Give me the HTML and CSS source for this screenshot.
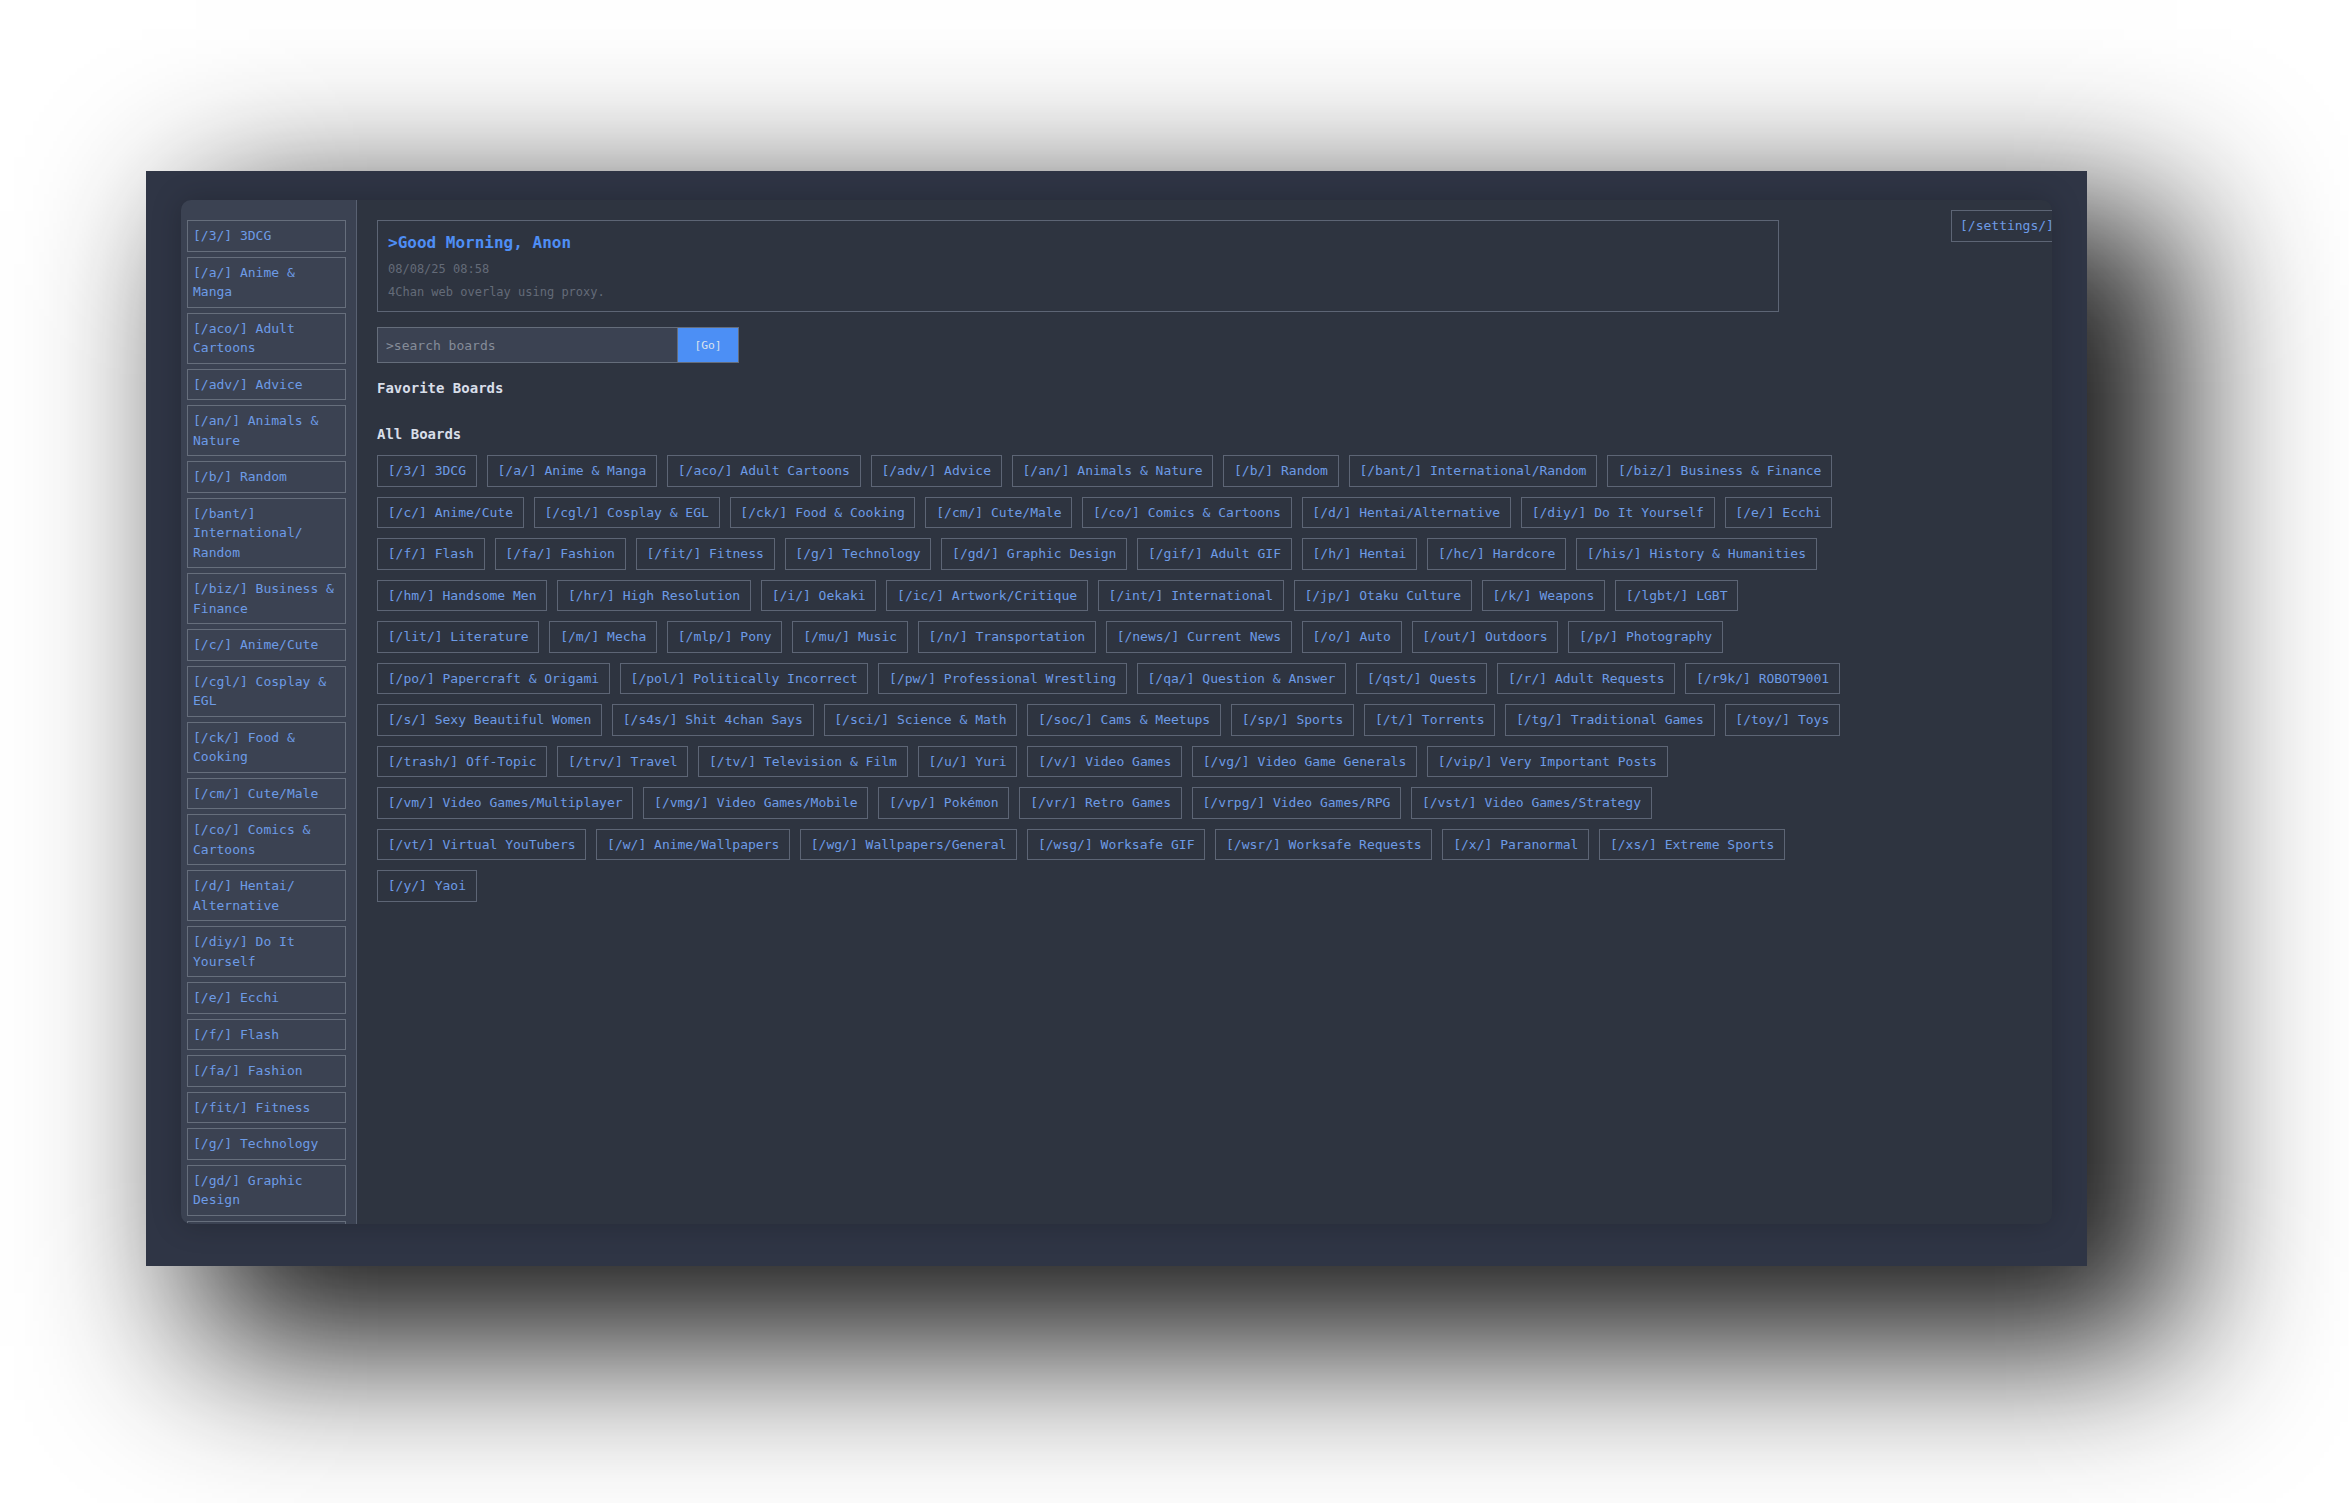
FILE: index.html
```html
<!DOCTYPE html>
<html lang="en">
<head>
<meta charset="utf-8">
<title>4Chan overlay</title>
<link rel="stylesheet" href="styles.css">
</head>
<body>
<div class="stage">
  <div class="window">
    <div class="panel">
      <nav class="sidebar">
        <a class="side-item">[/3/] 3DCG</a>
        <a class="side-item">[/a/] Anime &amp; Manga</a>
        <a class="side-item">[/aco/] Adult Cartoons</a>
        <a class="side-item">[/adv/] Advice</a>
        <a class="side-item">[/an/] Animals &amp; Nature</a>
        <a class="side-item">[/b/] Random</a>
        <a class="side-item">[/bant/] International/<wbr>Random</a>
        <a class="side-item">[/biz/] Business &amp; Finance</a>
        <a class="side-item">[/c/] Anime/Cute</a>
        <a class="side-item">[/cgl/] Cosplay &amp; EGL</a>
        <a class="side-item">[/ck/] Food &amp; Cooking</a>
        <a class="side-item">[/cm/] Cute/Male</a>
        <a class="side-item">[/co/] Comics &amp; Cartoons</a>
        <a class="side-item">[/d/] Hentai/<wbr>Alternative</a>
        <a class="side-item">[/diy/] Do It Yourself</a>
        <a class="side-item">[/e/] Ecchi</a>
        <a class="side-item">[/f/] Flash</a>
        <a class="side-item">[/fa/] Fashion</a>
        <a class="side-item">[/fit/] Fitness</a>
        <a class="side-item">[/g/] Technology</a>
        <a class="side-item">[/gd/] Graphic Design</a>
        <a class="side-item">[/gif/] Adult GIF</a>
        <a class="side-item">[/h/] Hentai</a>
        <a class="side-item">[/hc/] Hardcore</a>
      </nav>
      <main class="main">
        <section class="header">
          <h1 class="title">&gt;Good Morning, Anon</h1>
          <p class="meta">08/08/25 08:58</p>
          <p class="meta">4Chan web overlay using proxy.</p>
        </section>
        <form class="search">
          <input class="search-input" type="text" placeholder="&gt;search boards">
          <button class="go" type="button">[Go]</button>
        </form>
        <h3 class="section-title">Favorite Boards</h3>
        <div class="grid"></div>
        <h3 class="section-title">All Boards</h3>
        <div class="grid">
          <a class="board">[/3/] 3DCG</a>
          <a class="board">[/a/] Anime &amp; Manga</a>
          <a class="board">[/aco/] Adult Cartoons</a>
          <a class="board">[/adv/] Advice</a>
          <a class="board">[/an/] Animals &amp; Nature</a>
          <a class="board">[/b/] Random</a>
          <a class="board">[/bant/] International/Random</a>
          <a class="board">[/biz/] Business &amp; Finance</a>
          <a class="board">[/c/] Anime/Cute</a>
          <a class="board">[/cgl/] Cosplay &amp; EGL</a>
          <a class="board">[/ck/] Food &amp; Cooking</a>
          <a class="board">[/cm/] Cute/Male</a>
          <a class="board">[/co/] Comics &amp; Cartoons</a>
          <a class="board">[/d/] Hentai/Alternative</a>
          <a class="board">[/diy/] Do It Yourself</a>
          <a class="board">[/e/] Ecchi</a>
          <a class="board">[/f/] Flash</a>
          <a class="board">[/fa/] Fashion</a>
          <a class="board">[/fit/] Fitness</a>
          <a class="board">[/g/] Technology</a>
          <a class="board">[/gd/] Graphic Design</a>
          <a class="board">[/gif/] Adult GIF</a>
          <a class="board">[/h/] Hentai</a>
          <a class="board">[/hc/] Hardcore</a>
          <a class="board">[/his/] History &amp; Humanities</a>
          <a class="board">[/hm/] Handsome Men</a>
          <a class="board">[/hr/] High Resolution</a>
          <a class="board">[/i/] Oekaki</a>
          <a class="board">[/ic/] Artwork/Critique</a>
          <a class="board">[/int/] International</a>
          <a class="board">[/jp/] Otaku Culture</a>
          <a class="board">[/k/] Weapons</a>
          <a class="board">[/lgbt/] LGBT</a>
          <a class="board">[/lit/] Literature</a>
          <a class="board">[/m/] Mecha</a>
          <a class="board">[/mlp/] Pony</a>
          <a class="board">[/mu/] Music</a>
          <a class="board">[/n/] Transportation</a>
          <a class="board">[/news/] Current News</a>
          <a class="board">[/o/] Auto</a>
          <a class="board">[/out/] Outdoors</a>
          <a class="board">[/p/] Photography</a>
          <a class="board">[/po/] Papercraft &amp; Origami</a>
          <a class="board">[/pol/] Politically Incorrect</a>
          <a class="board">[/pw/] Professional Wrestling</a>
          <a class="board">[/qa/] Question &amp; Answer</a>
          <a class="board">[/qst/] Quests</a>
          <a class="board">[/r/] Adult Requests</a>
          <a class="board">[/r9k/] ROBOT9001</a>
          <a class="board">[/s/] Sexy Beautiful Women</a>
          <a class="board">[/s4s/] Shit 4chan Says</a>
          <a class="board">[/sci/] Science &amp; Math</a>
          <a class="board">[/soc/] Cams &amp; Meetups</a>
          <a class="board">[/sp/] Sports</a>
          <a class="board">[/t/] Torrents</a>
          <a class="board">[/tg/] Traditional Games</a>
          <a class="board">[/toy/] Toys</a>
          <a class="board">[/trash/] Off-Topic</a>
          <a class="board">[/trv/] Travel</a>
          <a class="board">[/tv/] Television &amp; Film</a>
          <a class="board">[/u/] Yuri</a>
          <a class="board">[/v/] Video Games</a>
          <a class="board">[/vg/] Video Game Generals</a>
          <a class="board">[/vip/] Very Important Posts</a>
          <a class="board">[/vm/] Video Games/Multiplayer</a>
          <a class="board">[/vmg/] Video Games/Mobile</a>
          <a class="board">[/vp/] Pokémon</a>
          <a class="board">[/vr/] Retro Games</a>
          <a class="board">[/vrpg/] Video Games/RPG</a>
          <a class="board">[/vst/] Video Games/Strategy</a>
          <a class="board">[/vt/] Virtual YouTubers</a>
          <a class="board">[/w/] Anime/Wallpapers</a>
          <a class="board">[/wg/] Wallpapers/General</a>
          <a class="board">[/wsg/] Worksafe GIF</a>
          <a class="board">[/wsr/] Worksafe Requests</a>
          <a class="board">[/x/] Paranormal</a>
          <a class="board">[/xs/] Extreme Sports</a>
          <a class="board">[/y/] Yaoi</a>
        </div>
      </main>
      <a class="settings">[/settings/]</a>
    </div>
  </div>
</div>
</body>
</html>
```

FILE: styles.css
```css
html, body {
  margin: 0;
  padding: 0;
  background: #ffffff;
}

body {
  font-family: "DejaVu Sans Mono", "Liberation Mono", monospace;
}

.stage {
  box-sizing: border-box;
  height: 1503px;
  padding: 171px 0 0 146px;
  overflow: hidden;
}

.window {
  width: 1941px;
  height: 1095px;
  box-sizing: border-box;
  padding: 29px 35px 42px;
  background: #2f3545;
  box-shadow: 70px 60px 150px 20px rgba(0, 0, 0, 0.9);
}

.panel {
  position: relative;
  display: flex;
  height: 100%;
  border-radius: 10px;
  overflow: hidden;
  background: #2e3440;
  box-shadow: 0 0 30px rgba(0, 0, 0, 0.22);
}

.sidebar {
  flex: none;
  width: 176px;
  box-sizing: border-box;
  padding: 20px 10px 20px 6px;
  background: #3b4252;
  border-right: 1px solid #596172;
  display: flex;
  flex-direction: column;
  gap: 5px;
  overflow: hidden;
}

.side-item {
  flex: none;
  border: 1px solid #666e7c;
  padding: 5px;
  font-size: 13px;
  line-height: 1.5;
  color: #6d9be6;
  cursor: pointer;
}

.main {
  flex: 1;
  min-width: 0;
  padding: 20px;
}

.header {
  max-width: 1402px;
  box-sizing: border-box;
  border: 1px solid #5d6575;
  padding: 10px;
}

.title {
  margin: 0;
  font-size: 16px;
  line-height: 24px;
  font-weight: bold;
  color: #4e8ef5;
}

.meta {
  margin: 5px 0 0;
  font-size: 12px;
  line-height: 18px;
  color: #646b78;
}

.search {
  display: flex;
  margin: 15px 0 0;
  height: 36px;
}

.search-input {
  width: 300px;
  box-sizing: border-box;
  height: 36px;
  margin: 0;
  padding: 0 8px;
  background: #3b4252;
  border: 1px solid #656d7b;
  border-right: none;
  font-family: "DejaVu Sans Mono", monospace;
  font-size: 13px;
  color: #d8dee9;
  outline: none;
}

.search-input::placeholder {
  color: #858c99;
}

.go {
  width: 62px;
  height: 36px;
  margin: 0;
  padding: 0;
  background: #4c8ff5;
  border: 1px solid #656d7b;
  font-family: "DejaVu Sans Mono", monospace;
  font-size: 11.3px;
  color: #dce3ee;
}

.section-title {
  margin: 15px 0 10px;
  font-size: 14px;
  line-height: 21px;
  font-weight: bold;
  color: #d8dee9;
}

.grid {
  display: flex;
  flex-wrap: wrap;
  gap: 10px;
  max-width: 1480px;
}

.board {
  border: 1px solid #5d6575;
  padding: 5px 9.75px;
  font-size: 13px;
  line-height: 19.5px;
  color: #6d9be6;
  white-space: nowrap;
  cursor: pointer;
}

.settings {
  position: absolute;
  top: 10px;
  left: 1770px;
  border: 1px solid #5d6575;
  padding: 5px 8px;
  font-size: 13px;
  line-height: 20px;
  color: #6d9be6;
  background: #2e3440;
  white-space: nowrap;
}
```
